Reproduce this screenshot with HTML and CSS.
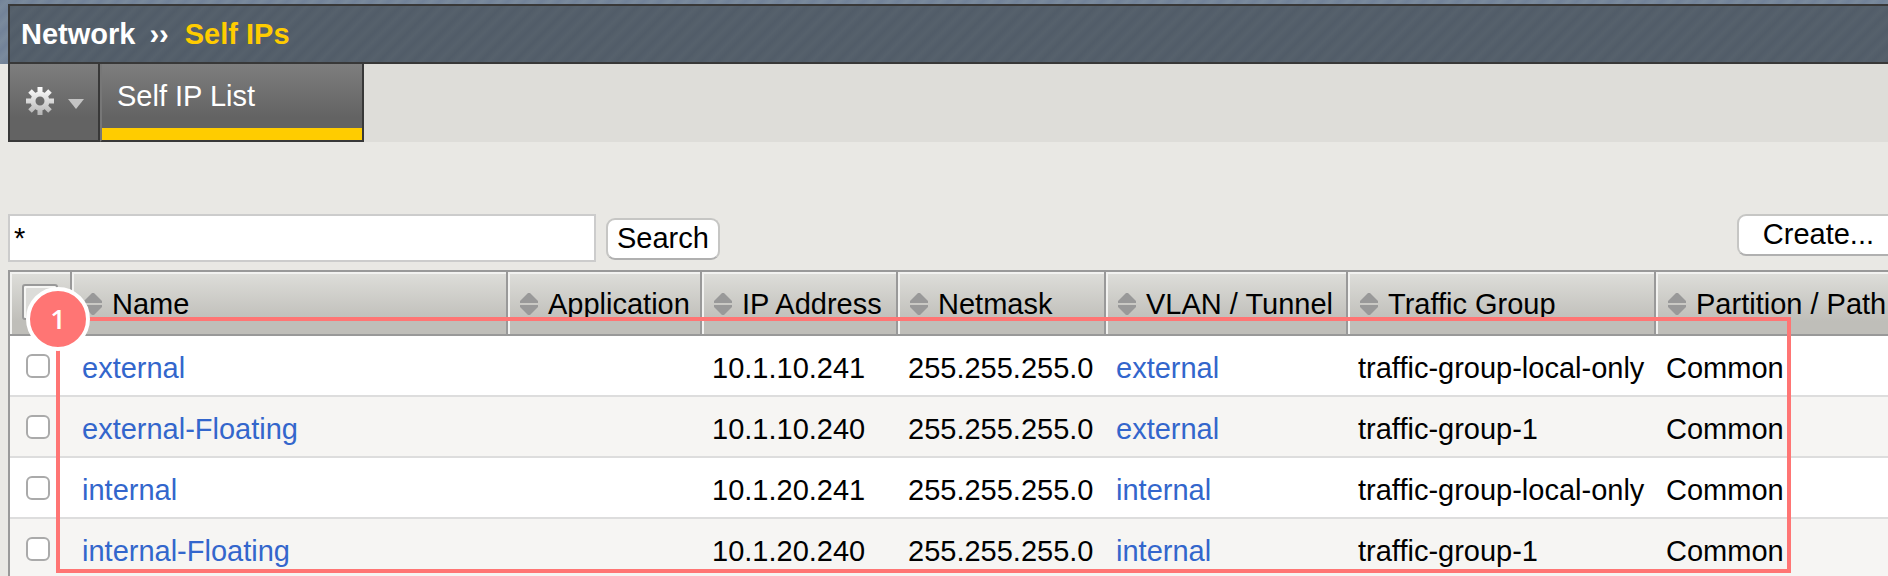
FILE: index.html
```html
<!DOCTYPE html>
<html lang="en">
<head>
<meta charset="utf-8">
<title>Network - Self IPs</title>
<link rel="stylesheet" href="styles.css">
</head>
<body>
<svg class="defs" aria-hidden="true">
  <symbol id="sort" viewBox="0 0 18 22"><path d="M8 0h2L18 8v2H0V8ZM0 12H18v2L10 22H8L0 14Z"/></symbol>
</svg>
<header class="masthead">
  <h1 class="crumbs"><span>Network</span><span class="sep">››</span><span class="current">Self IPs</span></h1>
</header>
<nav class="tabs">
  <button class="gear" type="button" aria-label="Options">
    <svg class="cog" viewBox="0 0 28 28" aria-hidden="true">
      <defs><linearGradient id="metal" gradientUnits="userSpaceOnUse" x1="0" y1="0" x2="0" y2="28"><stop offset="0" stop-color="#fff"/><stop offset="1" stop-color="#b4b4b4"/></linearGradient></defs>
      <g fill="none" stroke="url(#metal)">
        <circle cx="14" cy="14" r="7" stroke-width="5"/>
        <path stroke-width="5" d="M14 0V6M14 22V28M0 14H6M22 14H28M4 4 8 8M20 20 24 24M24 4 20 8M8 20 4 24"/>
      </g>
    </svg>
    <svg class="caret" viewBox="0 0 16 10" aria-hidden="true"><path fill="#c4c4c4" d="M0 0H16L8 10Z"/></svg>
  </button>
  <a class="tab" href="#list">Self IP List</a>
</nav>
<main class="content">
  <form class="toolbar">
    <input class="query" type="text" value="*" aria-label="Search filter">
    <button class="btn" type="button">Search</button>
    <button class="btn create" type="button">Create...</button>
  </form>
  <div class="listing" id="list">
    <table class="grid">
      <colgroup><col class="c-check"><col><col class="c-app"><col class="c-ip"><col class="c-mask"><col class="c-vlan"><col class="c-group"><col class="c-path"></colgroup>
      <thead>
        <tr>
          <th class="check"><input class="all" type="checkbox" aria-label="Select all"></th>
          <th><span class="head"><svg class="sort"><use href="#sort"/></svg>Name</span></th>
          <th><span class="head"><svg class="sort"><use href="#sort"/></svg>Application</span></th>
          <th><span class="head"><svg class="sort"><use href="#sort"/></svg>IP Address</span></th>
          <th><span class="head"><svg class="sort"><use href="#sort"/></svg>Netmask</span></th>
          <th><span class="head"><svg class="sort"><use href="#sort"/></svg>VLAN / Tunnel</span></th>
          <th><span class="head"><svg class="sort"><use href="#sort"/></svg>Traffic Group</span></th>
          <th><span class="head"><svg class="sort"><use href="#sort"/></svg>Partition / Path</span></th>
        </tr>
      </thead>
      <tbody>
        <tr><td class="check"><input class="box" type="checkbox" aria-label="Select external"></td><td><a href="#external">external</a></td><td></td><td>10.1.10.241</td><td>255.255.255.0</td><td><a href="#vlan-external">external</a></td><td>traffic-group-local-only</td><td>Common</td></tr>
        <tr><td class="check"><input class="box" type="checkbox" aria-label="Select external-Floating"></td><td><a href="#external-floating">external-Floating</a></td><td></td><td>10.1.10.240</td><td>255.255.255.0</td><td><a href="#vlan-external">external</a></td><td>traffic-group-1</td><td>Common</td></tr>
        <tr><td class="check"><input class="box" type="checkbox" aria-label="Select internal"></td><td><a href="#internal">internal</a></td><td></td><td>10.1.20.241</td><td>255.255.255.0</td><td><a href="#vlan-internal">internal</a></td><td>traffic-group-local-only</td><td>Common</td></tr>
        <tr><td class="check"><input class="box" type="checkbox" aria-label="Select internal-Floating"></td><td><a href="#internal-floating">internal-Floating</a></td><td></td><td>10.1.20.240</td><td>255.255.255.0</td><td><a href="#vlan-internal">internal</a></td><td>traffic-group-1</td><td>Common</td></tr>
      </tbody>
    </table>
    <div class="callout"><span class="badge">1</span></div>
  </div>
</main>
</body>
</html>
```
FILE: styles.css
```css
* { box-sizing: border-box; }

body {
  margin: 0;
  height: 100vh;
  overflow: hidden;
  background: #e9e8e4;
  color: #000;
  font: 29px/34px "Liberation Sans", Arial, sans-serif;
}

.defs { display: none; }

.masthead {
  padding: 4px 0 0 8px;
  background: repeating-linear-gradient(135deg, #728298 0, #7a8a9c 6px, #728298 12px);
}

.crumbs {
  display: flex;
  align-items: center;
  height: 60px;
  margin: 0;
  padding: 0 0 0 11px;
  border: 2px solid #383838;
  border-right: 0;
  background: repeating-linear-gradient(135deg, #515c68 0, #56616c 6px, #515c68 12px);
  color: #fff;
  font-size: 29px;
  line-height: 34px;
}

.sep { margin: 0 16px 0 14px; }
.current { color: #fc0; }

.tabs {
  display: flex;
  height: 78px;
  margin-left: 8px;
  background: #deddd9;
}

.gear, .tab {
  border: 2px solid #383838;
  border-top: 0;
  background: linear-gradient(#7e7e7e, #636363 70%);
}

.gear {
  display: flex;
  align-items: center;
  gap: 14px;
  width: 92px;
  padding: 0 0 2px 16px;
}

.cog { width: 28px; height: 28px; }
.caret { width: 16px; height: 10px; margin-top: 6px; }

.tab {
  width: 264px;
  padding: 15px 0 0 15px;
  border-left: 2px solid #777;
  box-shadow: inset 0 -12px #fc0;
  color: #fff;
  text-decoration: none;
}

.content { padding: 72px 0 0 8px; }

.toolbar {
  display: flex;
  align-items: flex-start;
  height: 56px;
  margin: 0;
}

.query {
  width: 588px;
  height: 48px;
  padding: 0 4px;
  border: 2px solid #ccc;
  background: #fff;
  font: inherit;
}

.btn {
  height: 42px;
  margin: 4px 0 0 10px;
  padding: 0 9px 2px;
  border: 2px solid #c6c6c4;
  border-bottom-color: #b0b0b0;
  border-radius: 9px;
  background: #fff;
  color: #000;
  font: inherit;
}

/* The button runs past the right edge of the window. */
.create {
  margin: 0 -12px 0 auto;
  padding: 0 24px 2px;
}

.listing { position: relative; }

.grid {
  width: 100%;
  table-layout: fixed;
  border-collapse: separate;
  border-spacing: 0;
  border-left: 2px solid #999;
  white-space: nowrap;
}

.c-check { width: 62px; }
.c-app { width: 194px; }
.c-ip { width: 196px; }
.c-mask { width: 208px; }
.c-vlan { width: 242px; }
.c-group { width: 308px; }
.c-path { width: 232px; }

th {
  height: 66px;
  padding: 2px 0 0 12px;
  border: solid #999;
  border-width: 2px 2px 2px 0;
  background: linear-gradient(#dededa, #bfbeb9 80%);
  box-shadow: inset 2px 2px #f2f2f0;
  font-weight: normal;
  text-align: left;
}

th:last-child { border-right: 0; }

.head {
  display: flex;
  align-items: center;
  gap: 10px;
}

.sort {
  flex: none;
  width: 18px;
  height: 22px;
  fill: #999;
}

td {
  height: 61px;
  padding: 4px 0 0 10px;
  border-bottom: 2px solid #ddd;
  background: #fff;
}

tr:nth-child(even) td { background: #f6f5f3; }

td a { color: #36c; text-decoration: none; }

td.check { padding: 0 0 0 16px; }
th.check { padding: 0 0 2px 12px; }

.box, .all {
  display: block;
  appearance: none;
  margin: 0;
  border: 2px solid #aaa;
  background: #fff;
}

.box {
  width: 24px;
  height: 24px;
  border-radius: 6px;
}

.all {
  width: 36px;
  height: 36px;
  border-color: #999;
  border-radius: 3px;
  background: #dcdcd9;
  box-shadow: inset 2px 2px #f6f6f4;
}

/* Annotation drawn over the listing. */
.callout {
  position: absolute;
  top: 47px;
  right: 97px;
  left: 48px;
  height: 256px;
  border: 4px solid #ff7574;
  pointer-events: none;
}

.badge {
  position: absolute;
  top: -34px;
  left: -34px;
  width: 64px;
  height: 64px;
  border: 4px solid #fff;
  border-radius: 50%;
  background: #ff7574;
  color: #fff;
  font: 600 27px/56px "Open Sans", sans-serif;
  text-align: center;
}
```
